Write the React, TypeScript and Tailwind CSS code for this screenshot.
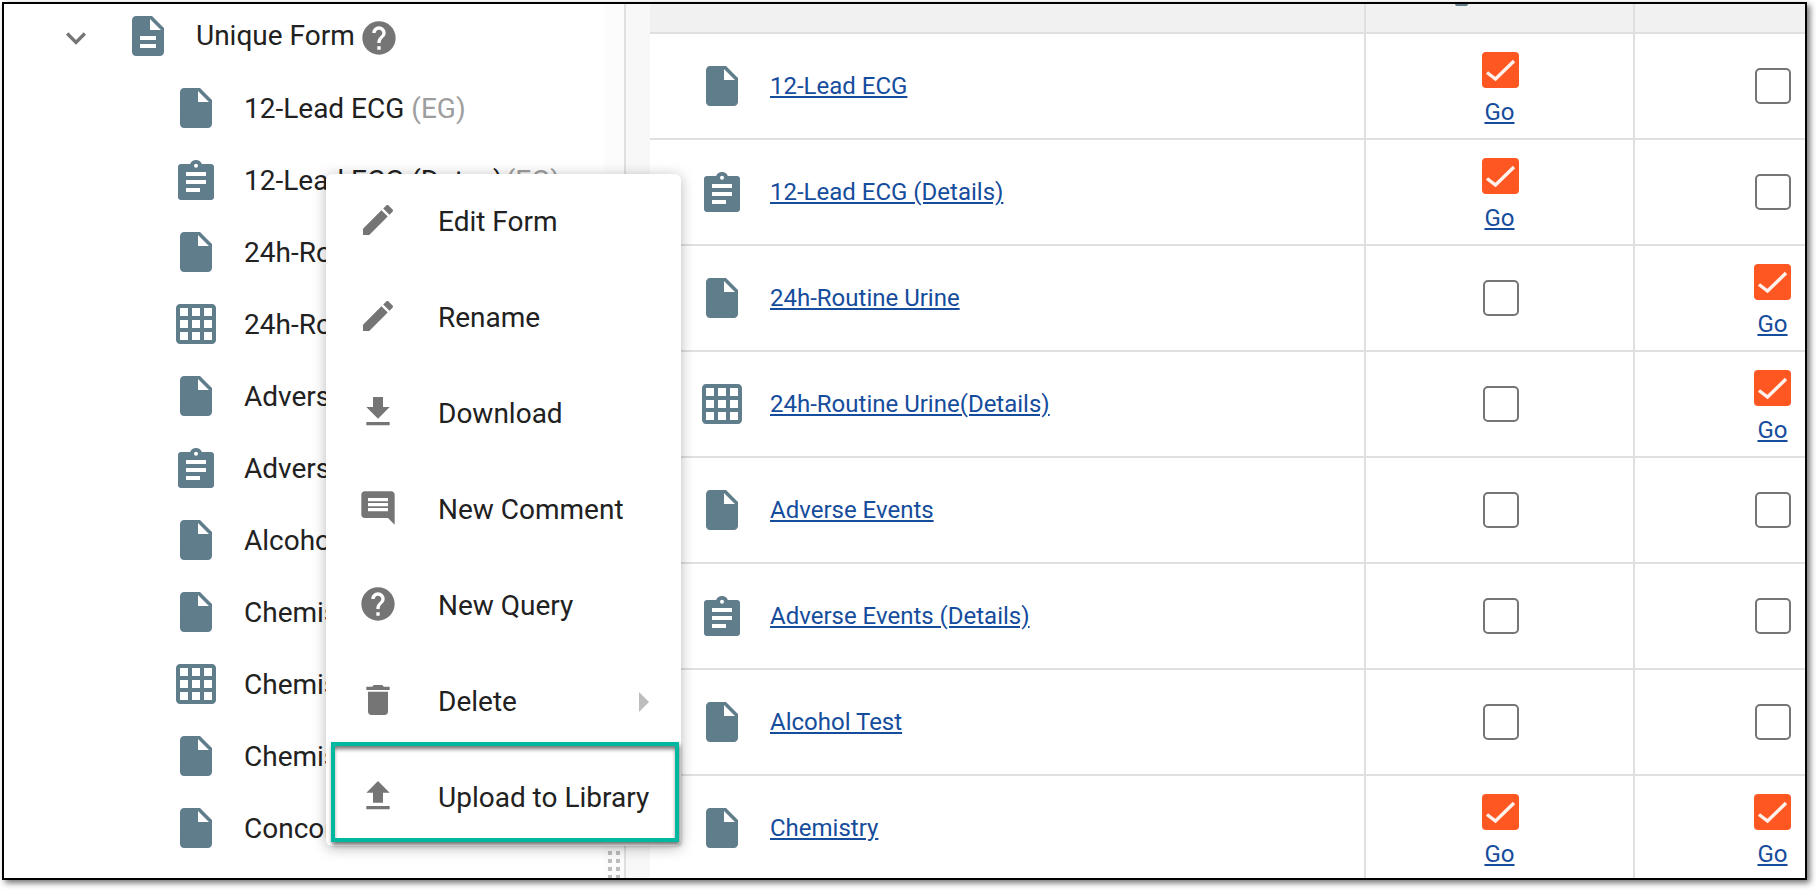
import React from "react";

const P = {
  file: "M6 2c-1.1 0-1.99.9-1.99 2L4 20c0 1.1.89 2 1.99 2H18c1.1 0 2-.9 2-2V8l-6-6H6zm7 7V3.5L18.5 9H13z",
  desc: "M14 2H6c-1.1 0-1.99.9-1.99 2L4 20c0 1.1.89 1.99 1.99 2H18c1.1 0 2-.9 2-2V8l-6-6zm2 16H8v-2h8v2zm0-4H8v-2h8v2zm-3-5V3.5L18.5 9H13z",
  grid: "M20 2H4c-1.1 0-2 .9-2 2v16c0 1.1.9 2 2 2h16c1.1 0 2-.9 2-2V4c0-1.1-.9-2-2-2zM8 20H4v-4h4v4zm0-6H4v-4h4v4zm0-6H4V4h4v4zm6 12h-4v-4h4v4zm0-6h-4v-4h4v4zm0-6h-4V4h4v4zm6 12h-4v-4h4v4zm0-6h-4v-4h4v4zm0-6h-4V4h4v4z",
  edit: "M3 17.25V21h3.75L17.81 9.94l-3.75-3.75L3 17.25zM20.71 7.04c.39-.39.39-1.02 0-1.41l-2.34-2.34c-.39-.39-1.02-.39-1.41 0l-1.83 1.83 3.75 3.75 1.83-1.83z",
  download: "M19 9h-4V3H9v6H5l7 7 7-7zM5 18v2h14v-2H5z",
  chat: "M20 2H4c-1.1 0-2 .9-2 2v12c0 1.1.9 2 2 2h14l4 4V4c0-1.1-.9-2-2-2zm-2 12H6v-2h12v2zm0-3H6V9h12v2zm0-3H6V6h12v2z",
  help: "M12 2C6.48 2 2 6.48 2 12s4.48 10 10 10 10-4.48 10-10S17.52 2 12 2zm1 17h-2v-2h2v2zm2.07-7.75l-.9.92C13.45 12.9 13 13.5 13 15h-2v-.5c0-1.1.45-2.1 1.17-2.83l1.24-1.26c.37-.36.59-.86.59-1.41 0-1.1-.9-2-2-2s-2 .9-2 2H8c0-2.21 1.79-4 4-4s4 1.79 4 4c0 .88-.36 1.68-.93 2.25z",
  trash: "M6 19c0 1.1.9 2 2 2h8c1.1 0 2-.9 2-2V7H6v12zM19 4h-3.5l-1-1h-5l-1 1H5v2h14V4z",
  upload: "M9 16h6v-6h4l-7-7-7 7h4v6zm-4 2h14v2H5v-2z",
  chevron: "M16.59 8.59L12 13.17 7.41 8.59 6 10l6 6 6-6z",
};

type Kind = "file" | "clip" | "grid";

function Mat({ d, className }: { d: string; className: string }) {
  return (
    <svg viewBox="0 0 24 24" className={className} fill="currentColor">
      <path d={d} />
    </svg>
  );
}

function Clip() {
  return (
    <svg viewBox="0 0 48 48" className="w-12 h-12 shrink-0 text-[#607d8b]" fill="currentColor">
      <path
        fillRule="evenodd"
        d="M9 8h9.2C19 5.6 21.3 4 24 4s5 1.6 5.8 4H39c1.7 0 3 1.3 3 3v30c0 1.7-1.3 3-3 3H9c-1.7 0-3-1.3-3-3V11c0-1.7 1.3-3 3-3zm15-.2a2 2 0 1 0 0 4 2 2 0 0 0 0-4zM14 16v4h20v-4H14zm0 8v4h20v-4H14zm0 8v4h14v-4H14z"
      />
    </svg>
  );
}

function KindIcon({ kind }: { kind: Kind }) {
  if (kind === "clip") return <Clip />;
  return <Mat d={kind === "file" ? P.file : P.grid} className="w-12 h-12 shrink-0 text-[#607d8b]" />;
}

const tree: [string, Kind, string?][] = [
  ["12-Lead ECG", "file", "(EG)"],
  ["12-Lead ECG (Dates)", "clip", "(EG)"],
  ["24h-Routine Urine", "file"],
  ["24h-Routine Urine(Details)", "grid"],
  ["Adverse Events", "file"],
  ["Adverse Events (Details)", "clip"],
  ["Alcohol Test", "file"],
  ["Chemistry", "file"],
  ["Chemistry (Details)", "grid"],
  ["Chemistry 2", "file"],
  ["Concomitant Medications", "file"],
];

const rows: [string, Kind, boolean, boolean][] = [
  ["12-Lead ECG", "file", true, false],
  ["12-Lead ECG (Details)", "clip", true, false],
  ["24h-Routine Urine", "file", false, true],
  ["24h-Routine Urine(Details)", "grid", false, true],
  ["Adverse Events", "file", false, false],
  ["Adverse Events (Details)", "clip", false, false],
  ["Alcohol Test", "file", false, false],
  ["Chemistry", "file", true, true],
];

const menu: [string, string][] = [
  ["Edit Form", P.edit],
  ["Rename", P.edit],
  ["Download", P.download],
  ["New Comment", P.chat],
  ["New Query", P.help],
  ["Delete", P.trash],
  ["Upload to Library", P.upload],
];

function Box({ checked, nudge }: { checked: boolean; nudge?: boolean }) {
  if (!checked) {
    return (
      <div
        className={
          nudge
            ? "w-9 h-9 mt-[34px] ml-[2px] rounded-[5px] border-2 border-[#757575] bg-white"
            : "w-9 h-9 mt-[34px] rounded-[5px] border-2 border-[#757575] bg-white"
        }
      />
    );
  }
  return (
    <>
      <div
        className={
          nudge
            ? "w-[37px] h-9 mt-[18px] ml-[2px] rounded-[4px] bg-[#ff5722] flex items-center justify-center"
            : "w-[37px] h-9 mt-[18px] rounded-[4px] bg-[#ff5722] flex items-center justify-center"
        }
      >
        <svg viewBox="0 0 37 36" className="w-[37px] h-9" fill="none" stroke="#fff" strokeOpacity="0.92" strokeWidth="3.4">
          <path d="M5 20.5 L13.5 27 L32 9" />
        </svg>
      </div>
      <a className="mt-[10px] leading-[28px] text-[24px] underline text-[#154c9c]">Go</a>
    </>
  );
}

export default function App() {
  const dots = Array.from({ length: 8 });
  return (
    <div className="w-[1816px] h-[890px] bg-white pl-[2px] pt-[2px] font-['Roboto',sans-serif] text-[#212121]">
      <div className="relative w-[1805px] h-[878px] border-2 border-black bg-white overflow-hidden flex shadow-[3px_3px_6px_rgba(0,0,0,0.55)]">
        <div className="w-[600px] shrink-0 overflow-hidden text-[28px]">
          <div className="h-[68px] flex items-center pl-[52px] whitespace-nowrap">
            <Mat d={P.chevron} className="w-10 h-10 shrink-0 text-[#757575]" />
            <Mat d={P.desc} className="w-12 h-12 shrink-0 ml-[28px] mb-1 text-[#607d8b]" />
            <span className="ml-6 mb-1">Unique Form</span>
            <Mat d={P.help} className="w-10 h-10 shrink-0 ml-1 text-[#757575]" />
          </div>
          {tree.map(([name, kind, code], i) => (
            <div key={i} className="h-[72px] flex items-center pl-[168px] whitespace-nowrap">
              <KindIcon kind={kind} />
              <span className="ml-6 mt-[2px]">{name}</span>
              {code && <span className={i === 1 ? "ml-[3px] mt-[2px] text-[#9e9e9e]" : "ml-[7px] mt-[2px] text-[#9e9e9e]"}>{code}</span>}
            </div>
          ))}
        </div>

        <div className="w-5 shrink-0 bg-[#fcfcfc] pl-1 pt-[847px]">
          <div className="grid grid-cols-[4px_4px] gap-x-1 gap-y-1">
            {dots.map((_, i) => (
              <div key={i} className="w-1 h-1 bg-[#bdbdbd]" />
            ))}
          </div>
        </div>
        <div className="w-[2px] shrink-0 bg-[#e0e0e0]" />
        <div className="w-6 shrink-0 bg-[#f8f8f8]" />

        <div className="w-[1155px] shrink-0 text-[24px]">
          <div className="flex h-[30px] bg-[#f1f1f1] border-b-2 border-[#e0e0e0]">
            <div className="w-[716px] shrink-0 border-r-2 border-[#e0e0e0]" />
            <div className="w-[269px] shrink-0 border-r-2 border-[#e0e0e0] pl-[89px]">
              <div className="w-[13px] h-[2px] rounded-b-full bg-[#607d8b]" />
            </div>
          </div>
          {rows.map(([name, kind, a, b], i) => (
            <div key={i} className="flex h-[106px] border-b-2 border-[#e0e0e0]">
              <div className="w-[716px] shrink-0 border-r-2 border-[#e0e0e0] flex items-center pl-[48px]">
                <KindIcon kind={kind} />
                <a className="ml-6 underline text-[#154c9c] whitespace-nowrap">{name}</a>
              </div>
              <div className="w-[269px] shrink-0 border-r-2 border-[#e0e0e0] flex flex-col items-center">
                <Box checked={a} nudge />
              </div>
              <div className="w-[170px] shrink-0 pl-[119px]">
                <div className="w-[37px] flex flex-col items-center">
                  <Box checked={b} />
                </div>
              </div>
            </div>
          ))}
        </div>

        <div className="absolute left-[322px] top-[170px] w-[355px] rounded-[6px] bg-white shadow-[0_2px_14px_rgba(0,0,0,0.28)] text-[28px]">
          {menu.map(([label, d], i) => (
            <div key={label} className="h-24 flex items-center pl-8 pr-8 whitespace-nowrap">
              <Mat d={d} className="w-10 h-10 shrink-0 mb-1 text-[#757575]" />
              <span className="ml-10">{label}</span>
              {i === 5 && (
                <svg viewBox="0 0 10 20" className="w-[10px] h-5 ml-auto" fill="#bdbdbd">
                  <path d="M0 0 L10 10 L0 20 Z" />
                </svg>
              )}
            </div>
          ))}
          <div className="absolute left-[5px] top-[568px] w-[348px] h-[100px] border-4 border-[#00b8a0] shadow-[1px_3px_4px_rgba(0,0,0,0.55),inset_0_4px_4px_-1px_rgba(0,0,0,0.55)]" />
        </div>
      </div>
    </div>
  );
}
